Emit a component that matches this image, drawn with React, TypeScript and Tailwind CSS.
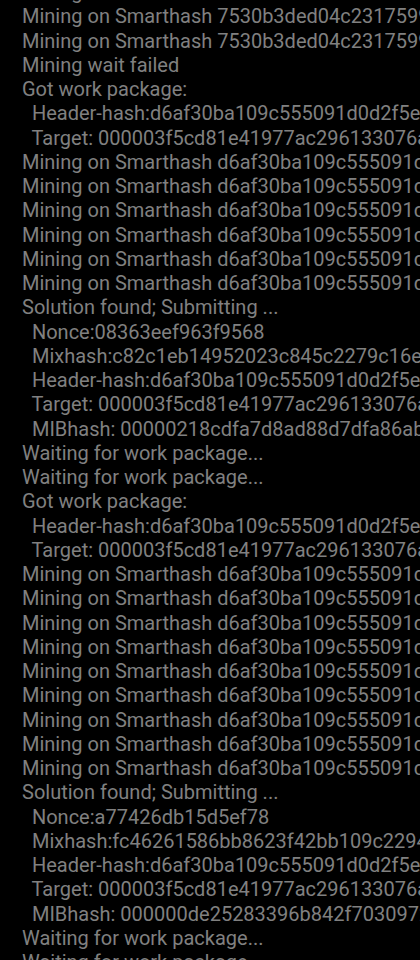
import React from 'react';

const mining1 = 'Mining on Smarthash 7530b3ded04c2317599a1e7f03';
const mining2 = 'Mining on Smarthash d6af30ba109c555091d0d2f5e8a4';
const header = '  Header-hash:d6af30ba109c555091d0d2f5e8a4c71b';
const target = '  Target: 000003f5cd81e41977ac296133076ae1f0';

const lines: string[] = [
  mining1,
  mining1,
  mining1,
  'Mining wait failed',
  'Got work package:',
  header,
  target,
  mining2,
  mining2,
  mining2,
  mining2,
  mining2,
  mining2,
  'Solution found; Submitting ...',
  '  Nonce:08363eef963f9568',
  '  Mixhash:c82c1eb14952023c845c2279c16e0a9d3b',
  header,
  target,
  '  MIBhash: 00000218cdfa7d8ad88d7dfa86ab3c41',
  'Waiting for work package...',
  'Waiting for work package...',
  'Got work package:',
  header,
  target,
  mining2,
  mining2,
  mining2,
  mining2,
  mining2,
  mining2,
  mining2,
  mining2,
  mining2,
  'Solution found; Submitting ...',
  '  Nonce:a77426db15d5ef78',
  '  Mixhash:fc46261586bb8623f42bb109c22948e7a1',
  header,
  target,
  '  MIBhash: 000000de25283396b842f7030972c5a8',
  'Waiting for work package...',
  'Waiting for work package...',
];

const App: React.FC = () => {
  return (
    <div className="w-[420px] h-[960px] bg-black overflow-hidden">
      <div
        className="-mt-[20px] pl-[22px] text-[20px] leading-[24.25px] text-[#808080] whitespace-pre"
        style={{ fontFamily: 'Roboto, "Noto Sans", sans-serif' }}
      >
        {lines.map((line, i) => (
          <div key={i}>{line}</div>
        ))}
      </div>
    </div>
  );
};

export default App;
